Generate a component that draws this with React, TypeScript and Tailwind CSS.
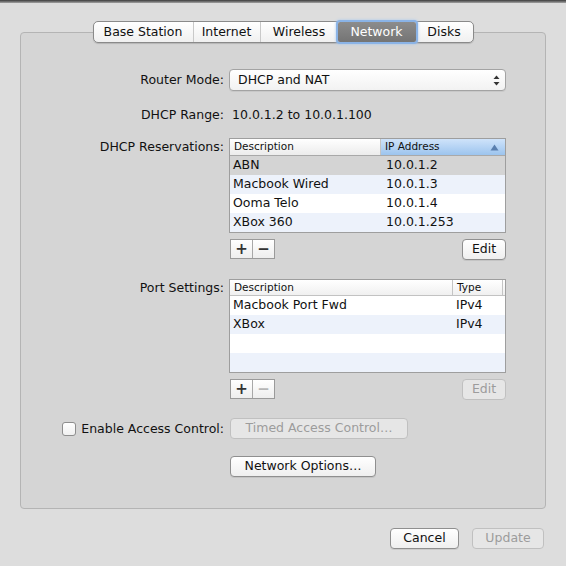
import React from "react";

const font = { fontFamily: '"DejaVu Sans", "Liberation Sans", sans-serif' };

type Tab = { name: string; w: string; active?: boolean };

const TABS: Tab[] = [
  { name: "Base Station", w: "w-[99px]" },
  { name: "Internet", w: "w-[67px]" },
  { name: "Wireless", w: "w-[78px]" },
  { name: "Network", w: "w-[78px]", active: true },
  { name: "Disks", w: "w-[57px]" },
];

const RESERVATIONS = [
  ["ABN", "10.0.1.2"],
  ["Macbook Wired", "10.0.1.3"],
  ["Ooma Telo", "10.0.1.4"],
  ["XBox 360", "10.0.1.253"],
];

const PORTS = [
  ["Macbook Port Fwd", "IPv4"],
  ["XBox", "IPv4"],
  ["", ""],
  ["", ""],
];

function Button({
  children,
  w,
  disabled,
}: {
  children: React.ReactNode;
  w: string;
  disabled?: boolean;
}) {
  return (
    <div
      className={`${w} h-[21px] flex items-center justify-center rounded-[4px] border text-[12.5px] ${
        disabled
          ? "border-[#c0c0c0] bg-[#e6e6e6] text-[#9c9c9c]"
          : "border-[#8f8f8f] bg-gradient-to-b from-white to-[#efefef] text-[#111] shadow-[0_1px_0_rgba(0,0,0,0.08)]"
      }`}
    >
      {children}
    </div>
  );
}

function PlusMinus({ minusDisabled }: { minusDisabled?: boolean }) {
  return (
    <div className="flex h-[20px] w-[45px] border border-[#9a9a9a] bg-gradient-to-b from-white to-[#eeeeee]">
      <div className="w-[22px] flex items-center justify-center border-r border-[#a8a8a8] text-[#333] text-[15px] font-bold leading-none">
        +
      </div>
      <div
        className={`flex-1 flex items-center justify-center text-[15px] font-bold leading-none ${
          minusDisabled ? "text-[#b5b5b5]" : "text-[#333]"
        }`}
      >
        −
      </div>
    </div>
  );
}

function Row({
  label,
  children,
  className,
  labelClass,
}: {
  label?: React.ReactNode;
  children: React.ReactNode;
  className?: string;
  labelClass?: string;
}) {
  return (
    <div className={`flex ${className ?? ""}`}>
      <div className={`w-[203px] shrink-0 text-right text-[12.5px] text-[#111] ${labelClass ?? ""}`}>
        {label}
      </div>
      <div className="ml-[5px] flex-1 pr-[40px]">{children}</div>
    </div>
  );
}

function SortArrow() {
  return (
    <svg width="9" height="7" viewBox="0 0 9 7">
      <path d="M4.5 0.5 L8.5 6.5 L0.5 6.5 Z" fill="#5a7fae" />
    </svg>
  );
}

export default function App() {
  return (
    <div className="w-[566px] h-[566px] bg-[#dddddd] overflow-hidden" style={font}>
      <div className="h-[3px] bg-gradient-to-b from-[#3c3c3c] to-[#a4a4a4]" />

      {/* Tabs */}
      <div className="flex justify-center mt-[18px] relative z-10">
        <div className="flex h-[22px] rounded-[5px] border border-[#8a8a8a] bg-gradient-to-b from-white to-[#f0f0f0] shadow-[0_1px_1px_rgba(0,0,0,0.15)]">
          {TABS.map((t, i) => (
            <div
              key={t.name}
              className={`${t.w} flex items-center justify-center text-[12.5px] ${
                t.active
                  ? "bg-gradient-to-b from-[#8c8c8c] to-[#747474] text-white shadow-[0_0_0_2px_#8ab3e6,0_0_3px_2px_#a8c8f0] relative z-10 rounded-[2px]"
                  : "text-[#111]"
              } ${
                i > 0 && !t.active && !TABS[i - 1].active ? "border-l border-[#c9c9c9]" : ""
              }`}
            >
              {t.name}
            </div>
          ))}
        </div>
      </div>

      {/* Group box */}
      <div className="mx-[20px] mt-[-11px] h-[477px] rounded-[4px] border border-[#b4b4b4] bg-[#d5d5d5] pt-[36px]">
        <Row label="Router Mode:" labelClass="leading-[22px]">
          <div className="h-[22px] w-[277px] rounded-[4px] border border-[#a3a3a3] bg-gradient-to-b from-white to-[#f2f2f2] flex items-center pl-[8px] pr-[5px] text-[12.5px] text-[#111] shadow-[0_1px_0_rgba(0,0,0,0.06)]">
            <span className="flex-1">DHCP and NAT</span>
            <svg width="7" height="11" viewBox="0 0 7 11">
              <path d="M3.5 0.5 L6.5 4 L0.5 4 Z" fill="#333" />
              <path d="M3.5 10.5 L6.5 7 L0.5 7 Z" fill="#333" />
            </svg>
          </div>
        </Row>

        <Row label="DHCP Range:" className="mt-[15px]" labelClass="leading-[18px]">
          <div className="pl-[3px] text-[12.5px] leading-[18px] text-[#111]">10.0.1.2 to 10.0.1.100</div>
        </Row>

        <Row label="DHCP Reservations:" className="mt-[14px]" labelClass="leading-[18px]">
          <div className="w-[277px] border border-[#9e9e9e] bg-white">
            <div className="flex h-[17px] border-b border-[#a9a9a9] text-[10.5px] text-[#111]">
              <div className="w-[151px] pl-[4px] flex items-center bg-gradient-to-b from-white to-[#ececec] border-r border-[#c4c4c4]">
                Description
              </div>
              <div className="flex-1 pl-[4px] pr-[6px] flex items-center bg-gradient-to-b from-[#cfe3fa] to-[#9cc4ee]">
                <span className="flex-1">IP Address</span>
                <SortArrow />
              </div>
            </div>
            {RESERVATIONS.map(([d, ip], i) => (
              <div
                key={d}
                className={`flex h-[19px] items-center text-[12.5px] text-[#111] ${
                  i === 0 ? "bg-[#d4d4d4]" : i % 2 === 1 ? "bg-[#edf2fb]" : "bg-white"
                }`}
              >
                <div className="w-[152px] pl-[3px]">{d}</div>
                <div className="pl-[4px]">{ip}</div>
              </div>
            ))}
          </div>
        </Row>

        <Row className="mt-[6px]">
          <div className="flex w-[277px] justify-between pl-[1px]">
            <PlusMinus />
            <Button w="w-[44px]">Edit</Button>
          </div>
        </Row>

        <Row label="Port Settings:" className="mt-[19px]" labelClass="leading-[17px]">
          <div className="w-[277px] border border-[#9e9e9e] bg-white">
            <div className="flex h-[16px] border-b border-[#c2c2c2] text-[10.5px] text-[#111] bg-gradient-to-b from-white to-[#f0f0f0]">
              <div className="w-[223px] pl-[4px] flex items-center border-r border-[#c4c4c4]">Description</div>
              <div className="w-[50px] pl-[4px] flex items-center border-r border-[#c4c4c4]">Type</div>
              <div className="flex-1" />
            </div>
            {PORTS.map(([d, t], i) => (
              <div
                key={i}
                className={`flex h-[19px] items-center text-[12.5px] text-[#111] ${
                  i % 2 === 1 ? "bg-[#edf2fb]" : "bg-white"
                }`}
              >
                <div className="w-[224px] pl-[3px]">{d}</div>
                <div className="pl-[2px]">{t}</div>
              </div>
            ))}
          </div>
        </Row>

        <Row className="mt-[6px]">
          <div className="flex w-[277px] justify-between pl-[1px]">
            <PlusMinus minusDisabled />
            <Button w="w-[44px]" disabled>
              Edit
            </Button>
          </div>
        </Row>

        <Row
          className="mt-[18px]"
          labelClass="leading-[21px]"
          label={
            <div className="flex items-center justify-end gap-[5px]">
              <div className="w-[14px] h-[14px] rounded-[3px] border border-[#8e8e8e] bg-gradient-to-b from-white to-[#f0f0f0]" />
              <span>Enable Access Control:</span>
            </div>
          }
        >
          <div className="pl-[1px]">
            <Button w="w-[178px]" disabled>
              Timed Access Control…
            </Button>
          </div>
        </Row>

        <Row className="mt-[17px]">
          <div className="pl-[1px]">
            <Button w="w-[146px]">Network Options…</Button>
          </div>
        </Row>
      </div>

      {/* Bottom buttons */}
      <div className="flex justify-end gap-[13px] pr-[22px] mt-[19px]">
        <Button w="w-[69px]">Cancel</Button>
        <Button w="w-[72px]" disabled>
          Update
        </Button>
      </div>
    </div>
  );
}
